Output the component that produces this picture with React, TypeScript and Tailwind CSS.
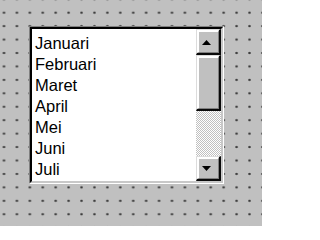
import React from "react";

const months = ["Januari", "Februari", "Maret", "April", "Mei", "Juni", "Juli"];

// raised win95 style bevel used by scroll buttons and thumb
const Bevel = ({ className, children }: { className: string; children?: React.ReactNode }) => (
  <div
    className={`border-t border-l border-t-[#dcdcdc] border-l-[#dcdcdc] border-b-2 border-r-2 border-b-[#0a0a0a] border-r-[#0a0a0a] ${className}`}
  >
    <div className="h-full w-full border-t-2 border-l-2 border-t-white border-l-white border-b border-r border-b-[#808080] border-r-[#808080] bg-[#c0c0c0] flex items-center justify-center">
      {children}
    </div>
  </div>
);

const App = () => {
  return (
    <div className="w-[262px] h-[226px] overflow-hidden bg-[#c0c0c0] bg-[radial-gradient(circle,#3c3c3c_0.9px,transparent_1.5px)] bg-[length:12.93px_13.45px] bg-[position:-2.47px_5.98px] pl-[29px] pt-[26px]">
      {/* listbox */}
      <div className="w-[195px] h-[158px] border-t border-l border-t-[#808080] border-l-[#808080] border-b border-r border-b-white border-r-white">
        <div className="h-full w-full border-t-2 border-l-2 border-t-black border-l-black border-b-2 border-r-2 border-b-[#c8c8c8] border-r-[#c8c8c8] flex">
          <div className="flex-1 bg-white overflow-hidden pl-[3px] pt-[4px] text-[16.5px] leading-[21px] text-black font-['Liberation_Sans',Arial,sans-serif]">
            {months.map((m) => (
              <div key={m}>{m}</div>
            ))}
          </div>

          {/* scrollbar */}
          <div className="w-[25px] flex flex-col">
            <Bevel className="h-[26px]">
              <svg width="9" height="5" viewBox="0 0 9 5" className="-ml-[4px]">
                <polygon points="4.5,0 9,5 0,5" fill="#000" />
              </svg>
            </Bevel>
            <Bevel className="h-[56px]" />
            <div className="flex-1 bg-[repeating-conic-gradient(#c0c0c0_0_25%,#ffffff_0_50%)] bg-[length:2px_2px]" />
            <Bevel className="h-[25px]">
              <svg width="9" height="5" viewBox="0 0 9 5" className="-ml-[4px]">
                <polygon points="0,0 9,0 4.5,5" fill="#000" />
              </svg>
            </Bevel>
          </div>
        </div>
      </div>
    </div>
  );
};

export default App;
